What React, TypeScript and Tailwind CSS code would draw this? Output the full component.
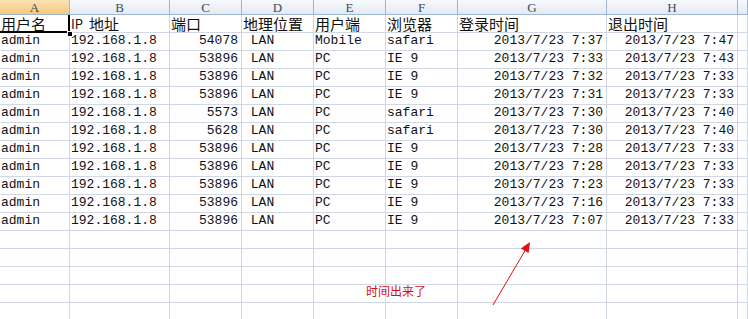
import React from "react";

const cols = [70, 100, 72, 72, 72, 72, 149, 131];
const letters = ["A", "B", "C", "D", "E", "F", "G", "H", ""];

type Row = [string, string, string, string, string, string, string, string];

const rows: Row[] = [
  ["admin", "192.168.1.8", "54078", " LAN", "Mobile", "safari", "2013/7/23 7:37", "2013/7/23 7:47"],
  ["admin", "192.168.1.8", "53896", " LAN", "PC", "IE 9", "2013/7/23 7:33", "2013/7/23 7:43"],
  ["admin", "192.168.1.8", "53896", " LAN", "PC", "IE 9", "2013/7/23 7:32", "2013/7/23 7:33"],
  ["admin", "192.168.1.8", "53896", " LAN", "PC", "IE 9", "2013/7/23 7:31", "2013/7/23 7:33"],
  ["admin", "192.168.1.8", "5573", " LAN", "PC", "safari", "2013/7/23 7:30", "2013/7/23 7:40"],
  ["admin", "192.168.1.8", "5628", " LAN", "PC", "safari", "2013/7/23 7:30", "2013/7/23 7:40"],
  ["admin", "192.168.1.8", "53896", " LAN", "PC", "IE 9", "2013/7/23 7:28", "2013/7/23 7:33"],
  ["admin", "192.168.1.8", "53896", " LAN", "PC", "IE 9", "2013/7/23 7:28", "2013/7/23 7:33"],
  ["admin", "192.168.1.8", "53896", " LAN", "PC", "IE 9", "2013/7/23 7:23", "2013/7/23 7:33"],
  ["admin", "192.168.1.8", "53896", " LAN", "PC", "IE 9", "2013/7/23 7:16", "2013/7/23 7:33"],
  ["admin", "192.168.1.8", "53896", " LAN", "PC", "IE 9", "2013/7/23 7:07", "2013/7/23 7:33"],
];

// right aligned columns: C, G, H
const rightCols = [2, 6, 7];

const heads: React.ReactNode[] = [
  "用户名",
  <>
    <span className="text-[13px]">IP  </span>地址
  </>,
  "端口",
  "地理位置",
  "用户端",
  "浏览器",
  "登录时间",
  "退出时间",
];

const gridCols = "grid grid-cols-[70px_100px_72px_72px_72px_72px_149px_131px_1fr]";

function Cell({ children, right }: { children?: React.ReactNode; right?: boolean }) {
  return (
    <div
      className={`h-[18px] border-r border-b border-[#d0d7e5] flex items-end overflow-hidden whitespace-pre leading-[16px] pb-[1px] ${
        right ? "justify-end pr-[3px]" : "pl-[1px]"
      }`}
    >
      {children}
    </div>
  );
}

export default function App() {
  const empty = 6;
  return (
    <div
      className="relative w-[748px] h-[319px] overflow-hidden bg-white text-[#111] text-[13px]"
      style={{ fontFamily: '"Liberation Mono", "Noto Sans CJK SC", monospace' }}
    >
      {/* column letters */}
      <div className={gridCols}>
        {letters.map((l, i) => (
          <div
            key={i}
            className={`h-[15px] flex items-center justify-center border-r border-b border-[#9eb6ce] text-[13px] leading-none text-[#3b4a60] ${
              i === 0
                ? "bg-gradient-to-b from-[#fbe2b3] to-[#f6c97c]"
                : "bg-gradient-to-b from-[#f7f9fc] to-[#e3eaf4]"
            }`}
            style={{ fontFamily: '"Liberation Serif", serif' }}
          >
            {l}
          </div>
        ))}
      </div>

      {/* header row */}
      <div className={gridCols}>
        {heads.map((h, i) => (
          <div
            key={i}
            className="h-[18px] border-r border-b border-[#d0d7e5] flex items-end pl-[1px] text-[15px] leading-[17px] whitespace-pre"
            style={{ fontFamily: '"Noto Sans CJK SC", "Liberation Mono", sans-serif' }}
          >
            {h}
          </div>
        ))}
        <Cell />
      </div>

      {rows.map((r, ri) => (
        <div key={ri} className={gridCols}>
          {r.map((v, ci) => (
            <Cell key={ci} right={rightCols.includes(ci)}>
              {v}
            </Cell>
          ))}
          <Cell />
        </div>
      ))}

      {Array.from({ length: empty }).map((_, ri) => (
        <div key={"e" + ri} className={gridCols}>
          {cols.map((_, ci) => (
            <Cell key={ci} />
          ))}
          <Cell />
        </div>
      ))}

      {/* A1 selection */}
      <div className="absolute left-0 top-[31px] w-[70px] h-[2px] bg-black" />
      <div className="absolute left-[68px] top-[15px] w-[2px] h-[18px] bg-black" />
      <div className="absolute left-[67px] top-[31px] w-[6px] h-[6px] bg-black border border-white" />

      {/* annotation */}
      <div
        className="absolute left-[366px] top-[283px] text-[12px] leading-[16px] text-[#d40f0f]"
        style={{ fontFamily: '"Noto Sans CJK SC", sans-serif' }}
      >
        时间出来了
      </div>
      <svg className="absolute left-0 top-0" width="748" height="319">
        <line x1="493" y1="305" x2="526" y2="249" stroke="#e01010" strokeWidth="1" />
        <polygon points="530,242 528.6,253 520.8,248.4" fill="#e01010" />
      </svg>
    </div>
  );
}
